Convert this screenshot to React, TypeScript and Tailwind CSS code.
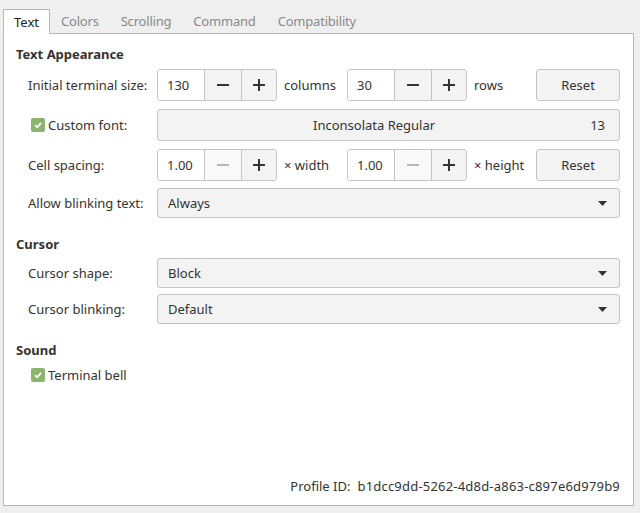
import React from "react";

const font = { fontFamily: '"Noto Sans", "DejaVu Sans", sans-serif' };

function Minus({ dim }: { dim?: boolean }) {
  return (
    <svg width="12" height="12" viewBox="0 0 12 12">
      <rect x="0" y="5" width="12" height="2" fill={dim ? "#b8b8b8" : "#333"} />
    </svg>
  );
}

function Plus() {
  return (
    <svg width="12" height="12" viewBox="0 0 12 12">
      <rect x="0" y="5" width="12" height="2" fill="#333" />
      <rect x="5" y="0" width="2" height="12" fill="#333" />
    </svg>
  );
}

function Spin({ value, minusDim }: { value: string; minusDim?: boolean }) {
  return (
    <div className="flex h-[32px] w-[120px] rounded-[3px] border border-[#c4c4c4] overflow-hidden">
      <div className="w-[46px] bg-white flex items-center pl-[9px] text-[#333]">{value}</div>
      <div
        className={
          "w-[37px] border-l border-[#c4c4c4] flex items-center justify-center " +
          (minusDim ? "bg-[#f9f9f9]" : "bg-[#f3f3f3]")
        }
      >
        <Minus dim={minusDim} />
      </div>
      <div className="flex-1 border-l border-[#c4c4c4] bg-[#f3f3f3] flex items-center justify-center">
        <Plus />
      </div>
    </div>
  );
}

function Check() {
  return (
    <span className="w-[14px] h-[14px] rounded-[2px] bg-[#8db46f] flex items-center justify-center mr-[3px]">
      <svg width="10" height="10" viewBox="0 0 10 10">
        <path d="M2 5.2 L4.2 7.3 L8 2.8" stroke="#fff" strokeWidth="1.8" fill="none" />
      </svg>
    </span>
  );
}

function Combo({ value }: { value: string }) {
  return (
    <div className="flex-1 h-[30px] rounded-[3px] border border-[#c4c4c4] bg-[#f3f3f3] flex items-center pl-[10px] pr-[12px]">
      <span className="flex-1">{value}</span>
      <svg width="9" height="5" viewBox="0 0 9 5">
        <path d="M0 0 H9 L4.5 5 Z" fill="#333" />
      </svg>
    </div>
  );
}

function Reset() {
  return (
    <div className="w-[84px] h-[32px] rounded-[3px] border border-[#c4c4c4] bg-[#f3f3f3] flex items-center justify-center">
      Reset
    </div>
  );
}

export default function App() {
  const tabs = ["Colors", "Scrolling", "Command", "Compatibility"];
  return (
    <div
      className="w-[640px] h-[513px] bg-[#efefef] pt-[9px] px-[3px] text-[13px] text-[#333] leading-[18px]"
      style={font}
    >
      <div className="flex h-[24px] relative z-10">
        <div className="h-[25px] px-[10px] bg-white border border-b-0 border-[#b8b8b8] flex items-center rounded-t-[1px] text-[#222]">
          Text
        </div>
        {tabs.map((t) => (
          <div key={t} className="px-[11px] flex items-center text-[#8a8a8a] tracking-[-0.2px]">
            {t}
          </div>
        ))}
      </div>
      <div className="w-[631px] h-[473px] bg-white border border-[#b8b8b8] flex flex-col px-[12px] pt-[11px] pb-[10px]">
        <div className="font-bold">Text Appearance</div>
        <div className="pl-[12px] mt-[6px] flex flex-col">
          <div className="flex items-center">
            <div className="w-[129px]">Initial terminal size:</div>
            <Spin value="130" />
            <div className="w-[70px] pl-[7px]">columns</div>
            <Spin value="30" />
            <div className="w-[69px] pl-[7px]">rows</div>
            <Reset />
          </div>
          <div className="flex items-center mt-[8px]">
            <div className="w-[129px] flex items-center pl-[3px]">
              <Check />
              Custom font:
            </div>
            <div className="w-[463px] h-[32px] rounded-[3px] border border-[#c4c4c4] bg-[#f3f3f3] flex items-center">
              <span className="flex-1 text-center">Inconsolata Regular</span>
              <span className="pr-[14px]">13</span>
            </div>
          </div>
          <div className="flex items-center mt-[8px]">
            <div className="w-[129px]">Cell spacing:</div>
            <Spin value="1.00" minusDim />
            <div className="w-[70px] pl-[7px]">× width</div>
            <Spin value="1.00" minusDim />
            <div className="w-[69px] pl-[7px]">× height</div>
            <Reset />
          </div>
          <div className="flex items-center mt-[7px] w-[592px]">
            <div className="w-[129px]">Allow blinking text:</div>
            <Combo value="Always" />
          </div>
        </div>
        <div className="font-bold mt-[17px]">Cursor</div>
        <div className="pl-[12px] mt-[5px] flex flex-col">
          <div className="flex items-center w-[592px]">
            <div className="w-[129px]">Cursor shape:</div>
            <Combo value="Block" />
          </div>
          <div className="flex items-center w-[592px] mt-[6px]">
            <div className="w-[129px]">Cursor blinking:</div>
            <Combo value="Default" />
          </div>
        </div>
        <div className="font-bold mt-[17px]">Sound</div>
        <div className="pl-[15px] mt-[7px] flex items-center">
          <Check />
          Terminal bell
        </div>
        <div className="flex-1" />
        <div className="flex justify-end pr-[1px]">
          <span>Profile ID:</span>
          <span className="ml-[7px] tracking-[0.2px]">b1dcc9dd-5262-4d8d-a863-c897e6d979b9</span>
        </div>
      </div>
    </div>
  );
}
